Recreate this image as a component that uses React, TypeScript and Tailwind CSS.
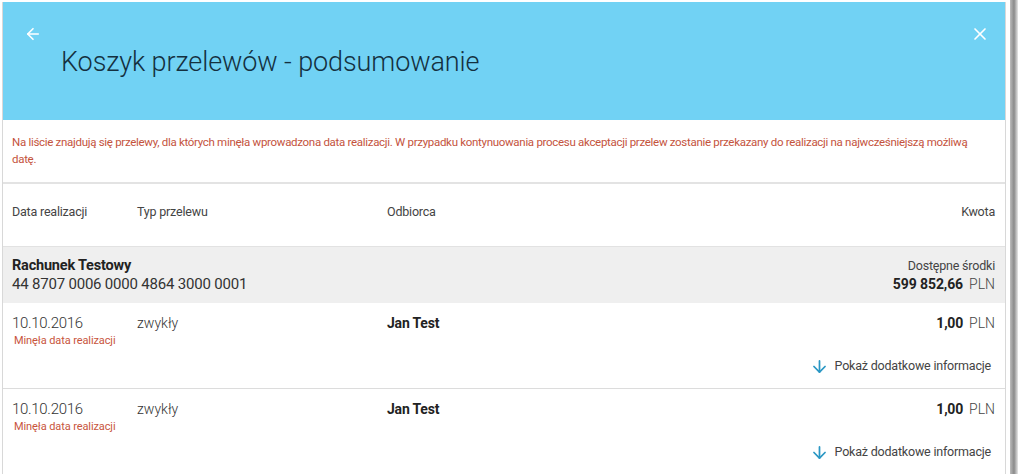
import { ArrowLeft, ArrowDown, X } from "lucide-react";

type Transfer = {
  date: string;
  type: string;
  recipient: string;
  amount: string;
};

const transfers: Transfer[] = [
  { date: "10.10.2016", type: "zwykły", recipient: "Jan Test", amount: "1,00" },
  { date: "10.10.2016", type: "zwykły", recipient: "Jan Test", amount: "1,00" },
];

function TransferRow({ t }: { t: Transfer }) {
  return (
    <div className="border-b border-[#dcdcdc] h-[86px] shrink-0 pl-[9px] pr-[10px] pt-[10px]">
      <div className="flex items-start">
        <div className="w-[125px]">
          <div className="text-[15px] font-light text-[#333] leading-[20px] tracking-[-0.3px]">{t.date}</div>
          <div className="text-[11px] text-[#c8553d] leading-[14px] mt-[1px] pl-[2px] tracking-[-0.1px]">
            Minęła data realizacji
          </div>
        </div>
        <div className="w-[250px] text-[14px] font-light text-[#333] leading-[20px]">{t.type}</div>
        <div className="flex-1 text-[14px] font-bold text-[#222] leading-[20px] tracking-[-0.2px]">{t.recipient}</div>
        <div className="text-[14px] leading-[20px] text-[#222]">
          <span className="font-bold tracking-[-0.2px]">{t.amount}</span>
          <span className="font-light ml-[6px] text-[#444]">PLN</span>
        </div>
      </div>
      <div className="flex justify-end items-center mt-[9px] pr-[4px]">
        <ArrowDown size={19} strokeWidth={2.2} className="text-[#2a97c4] mr-[6px]" />
        <span className="text-[12.5px] text-[#444] tracking-[-0.2px]">Pokaż dodatkowe informacje</span>
      </div>
    </div>
  );
}

export default function App() {
  return (
    <div
      className="w-[1024px] h-[474px] bg-white flex overflow-hidden"
      style={{ fontFamily: "Roboto, 'Noto Sans', sans-serif" }}
    >
      <div className="ml-[2px] mt-[2px] w-[1004px] flex flex-col border-l border-r border-[#d8d8d8]">
        <div className="bg-[#71d2f4] h-[118px] shrink-0">
          <div className="flex justify-between items-center pl-[21px] pr-[23px] pt-[22px]">
            <ArrowLeft size={18} strokeWidth={2.2} className="text-white" />
            <X size={20} strokeWidth={2} className="text-white mr-[-8px]" />
          </div>
          <h1 className="ml-[58px] mt-[-2px] text-[27px] font-light text-[#14303f] tracking-[-0.1px]">
            Koszyk przelewów - podsumowanie
          </h1>
        </div>
        <div className="pl-[9px] pr-[14px] pt-[14px] pb-[14px] border-b-2 border-[#e3e3e3] text-[11.5px] leading-[17px] text-[#c4533d] tracking-[-0.3px]">
          Na liście znajdują się przelewy, dla których minęła wprowadzona data realizacji. W przypadku kontynuowania procesu
          akceptacji przelew zostanie przekazany do realizacji na najwcześniejszą możliwą datę.
        </div>
        <div className="flex items-center h-[62px] shrink-0 pl-[9px] pr-[10px] text-[12.5px] text-[#444] tracking-[-0.2px] pb-[5px]">
          <div className="w-[125px]">Data realizacji</div>
          <div className="w-[250px]">Typ przelewu</div>
          <div className="flex-1">Odbiorca</div>
          <div>Kwota</div>
        </div>
        <div className="bg-[#efefef] h-[57px] shrink-0 flex justify-between items-center pl-[9px] pr-[10px] border-t border-[#e2e2e2]">
          <div>
            <div className="text-[14.5px] font-bold text-[#222] leading-[19px] tracking-[-0.2px]">Rachunek Testowy</div>
            <div className="text-[15px] text-[#333] leading-[19px] tracking-[-0.2px]">44 8707 0006 0000 4864 3000 0001</div>
          </div>
          <div className="text-right">
            <div className="text-[12.5px] text-[#444] leading-[19px] tracking-[-0.2px]">Dostępne środki</div>
            <div className="text-[14px] leading-[19px] text-[#222]">
              <span className="font-bold tracking-[-0.1px]">599 852,66</span>
              <span className="font-light ml-[6px] text-[#444]">PLN</span>
            </div>
          </div>
        </div>
        {transfers.map((t, i) => (
          <TransferRow key={i} t={t} />
        ))}
      </div>
      <div className="ml-[4px] w-[8px] h-full bg-gradient-to-r from-[#bcbcbc] via-[#8a8a8a] to-[#e8e8e8]" />
    </div>
  );
}
